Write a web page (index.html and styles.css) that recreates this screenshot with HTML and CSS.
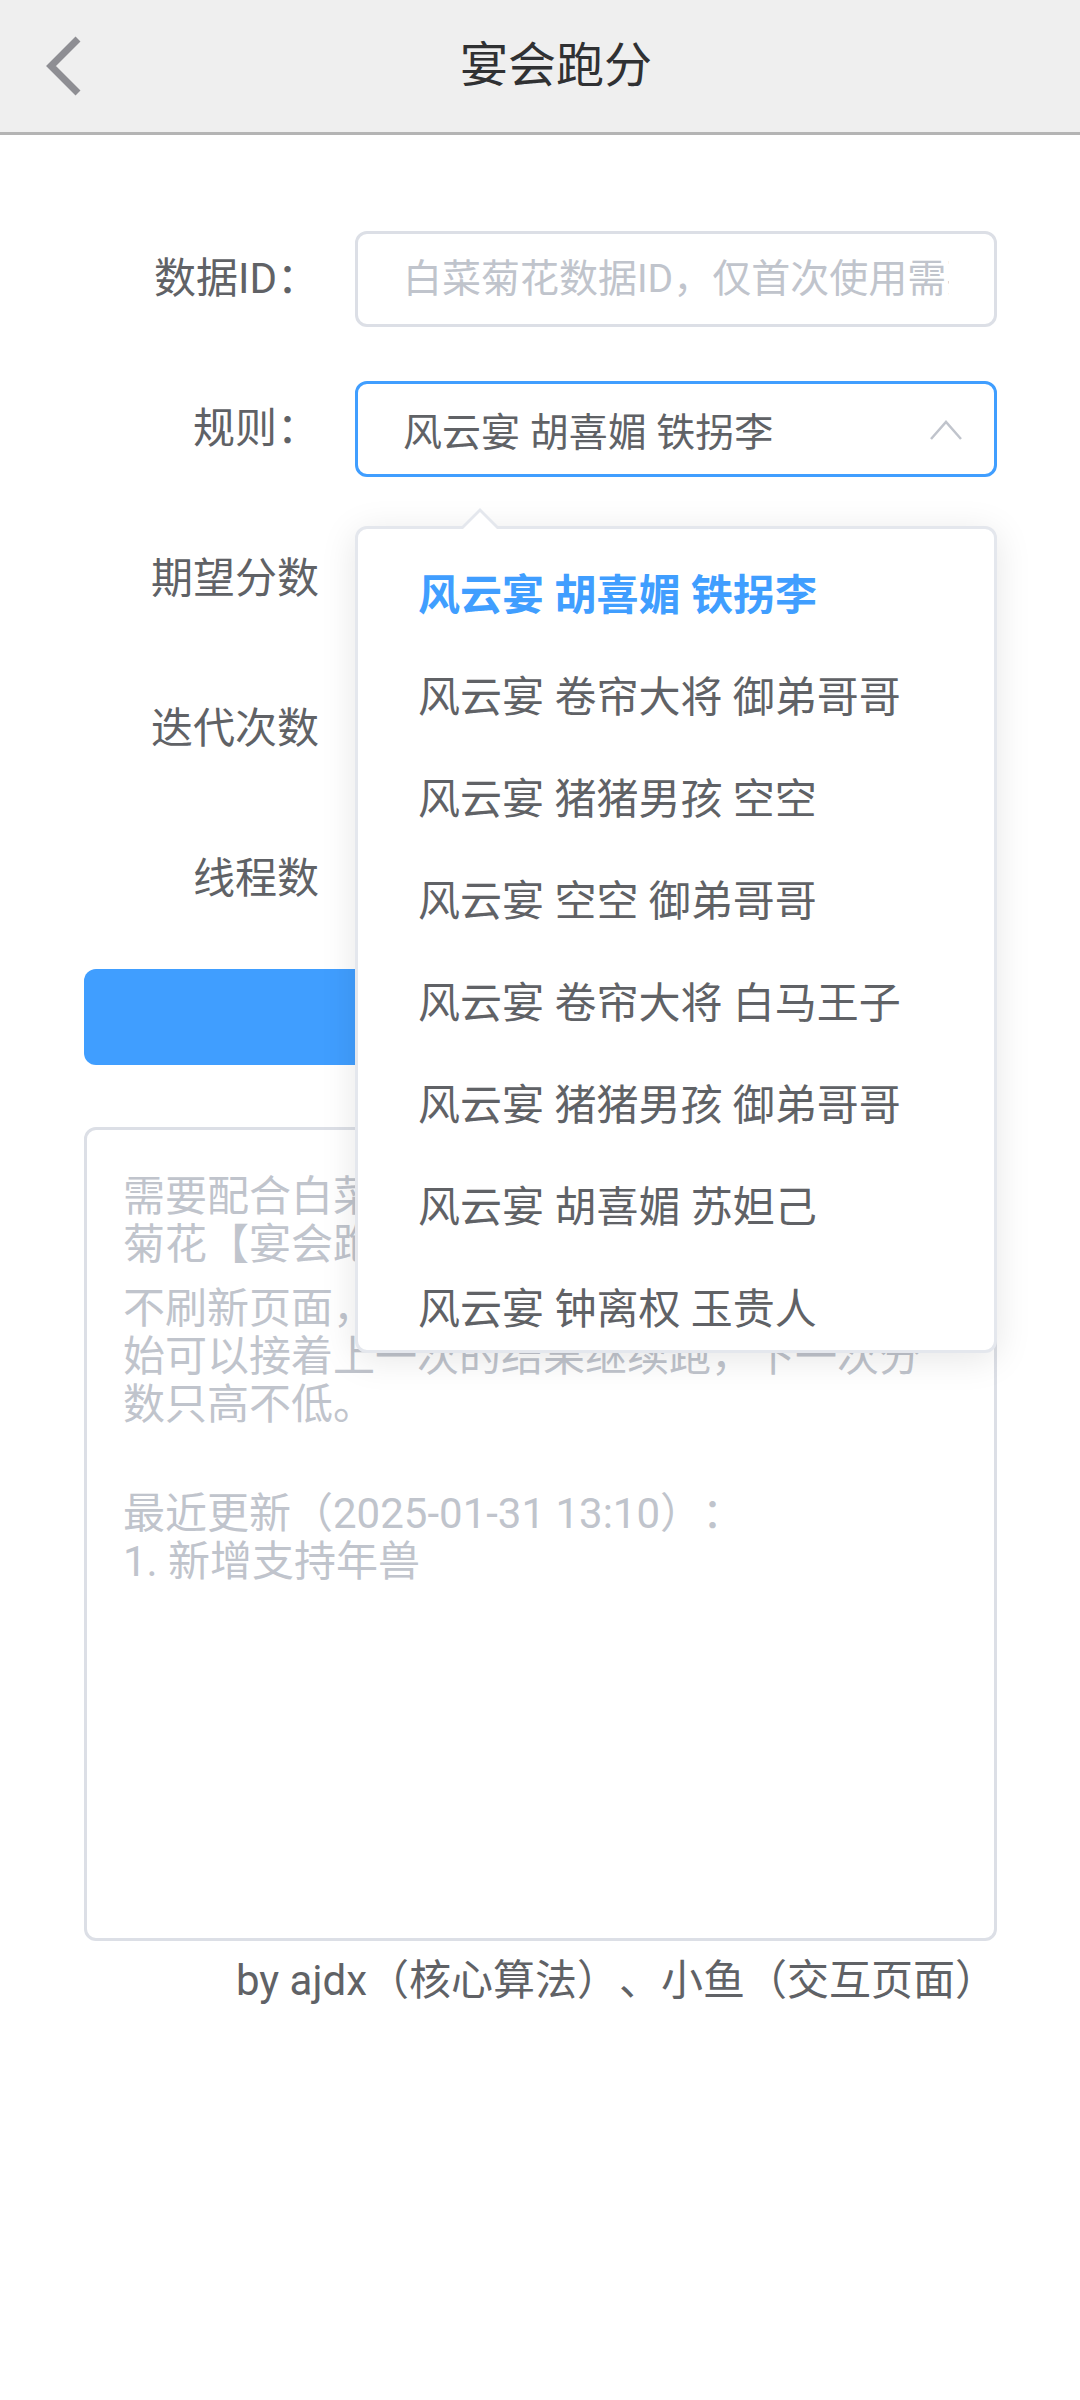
FILE: index.html
```html
<!DOCTYPE html>
<html lang="zh-CN">
<head>
<meta charset="utf-8">
<title>宴会跑分</title>
<link rel="stylesheet" href="styles.css">
</head>
<body>
<header class="topbar">
  <div class="back">
    <svg class="back-icon" width="40" height="64" viewBox="0 0 40 64" aria-hidden="true">
      <polyline points="34,5 7,32 34,59" fill="none" stroke="#8e8e93" stroke-width="7" stroke-linejoin="miter"/>
    </svg>
  </div>
  <h1 class="title">宴会跑分</h1>
  <div class="spacer"></div>
</header>

<main class="page">
  <div class="rows">
    <div class="row">
      <label class="label">数据ID：</label>
      <div class="control">
        <input class="input" type="text" placeholder="白菜菊花数据ID，仅首次使用需要填写">
      </div>
    </div>
    <div class="row">
      <label class="label">规则：</label>
      <div class="control select-wrap">
        <div class="select">
          <span class="select-value">风云宴 胡喜媚 铁拐李</span>
          <svg class="select-arrow" width="36" height="24" viewBox="0 0 36 24" aria-hidden="true">
            <polyline points="3,22 18,5 33,22" fill="none" stroke="#c0c4cc" stroke-width="2.5"/>
          </svg>
        </div>
        <div class="dropdown">
          <ul class="options">
            <li class="option selected">风云宴 胡喜媚 铁拐李</li>
            <li class="option">风云宴 卷帘大将 御弟哥哥</li>
            <li class="option">风云宴 猪猪男孩 空空</li>
            <li class="option">风云宴 空空 御弟哥哥</li>
            <li class="option">风云宴 卷帘大将 白马王子</li>
            <li class="option">风云宴 猪猪男孩 御弟哥哥</li>
            <li class="option">风云宴 胡喜媚 苏妲己</li>
            <li class="option">风云宴 钟离权 玉贵人</li>
            <li class="option">风云宴 年兽</li>
          </ul>
        </div>
      </div>
    </div>
    <div class="row">
      <label class="label">期望分数</label>
      <div class="control"><input class="input" type="text" value="0"></div>
    </div>
    <div class="row">
      <label class="label">迭代次数</label>
      <div class="control"><input class="input" type="text" value="100"></div>
    </div>
    <div class="row">
      <label class="label">线程数</label>
      <div class="control"><input class="input" type="text" value="4"></div>
    </div>
  </div>

  <button class="run" type="button">开始跑分</button>

  <div class="notes">
    <div class="line">需要配合白菜菊花小程序使用，请先在白菜</div>
    <div class="line">菊花【宴会跑分】页面上传数据。</div>
    <div class="line para">不刷新页面，多次点击开始按钮时，重新开</div>
    <div class="line">始可以接着上一次的结果继续跑，下一次分</div>
    <div class="line">数只高不低。</div>
    <div class="line blank"></div>
    <div class="line para-s">最近更新（2025-01-31 13:10）：</div>
    <div class="line">1. 新增支持年兽</div>
  </div>

  <p class="credit">by ajdx（核心算法）、小鱼（交互页面）</p>
</main>
</body>
</html>
```

FILE: styles.css
```css
* {
  box-sizing: border-box;
}

html, body {
  margin: 0;
  padding: 0;
  background: #ffffff;
}

body {
  width: 1080px;
  min-height: 2400px;
  font-family: Roboto, "Noto Sans CJK SC", "Noto Sans", sans-serif;
  color: #606266;
  text-spacing-trim: space-all;
}

/* ---------- top bar ---------- */
.topbar {
  display: flex;
  align-items: center;
  height: 135px;
  background: #efefef;
  border-bottom: 3px solid #b4b4b4;
}

.back {
  width: 132px;
  padding-left: 44px;
  display: flex;
  align-items: center;
}

.back-icon {
  display: block;
}

.title {
  flex: 1;
  margin: 0;
  text-align: center;
  font-size: 48px;
  font-weight: 400;
  color: #303133;
  line-height: 132px;
}

.spacer {
  width: 100px;
}

/* ---------- form ---------- */
.page {
  padding: 96px 83px 0 84px;
}

.rows {
  display: flex;
  flex-direction: column;
  gap: 54px;
}

.row {
  display: flex;
  height: 96px;
}

.label {
  width: 271px;
  padding-right: 36px;
  text-align: right;
  font-size: 42px;
  line-height: 96px;
  color: #606266;
  white-space: nowrap;
}

.control {
  flex: 1;
  min-width: 0;
}

.input {
  display: block;
  width: 100%;
  height: 96px;
  padding: 0 45px;
  border: 3px solid #dcdfe6;
  border-radius: 12px;
  background: #ffffff;
  font-family: inherit;
  font-size: 39px;
  color: #606266;
  outline: none;
  text-spacing-trim: space-all;
}

.input::placeholder {
  color: #c0c4cc;
}

.select-wrap {
  position: relative;
}

.select {
  display: flex;
  align-items: center;
  justify-content: space-between;
  height: 96px;
  padding: 0 30px 0 45px;
  border: 3px solid #409eff;
  border-radius: 12px;
  background: #ffffff;
  font-size: 39px;
  color: #606266;
}

.select-value {
  white-space: nowrap;
}

.select-arrow {
  display: block;
}

/* ---------- dropdown ---------- */
.dropdown {
  position: absolute;
  z-index: 10;
  top: 145px;
  left: 0;
  right: 0;
  height: 827px;
  background: #ffffff;
  border: 3px solid #e4e7ed;
  border-radius: 12px;
  box-shadow: 0 6px 36px rgba(0, 0, 0, 0.1);
}

.dropdown::before,
.dropdown::after {
  content: "";
  position: absolute;
  left: 104px;
  width: 0;
  height: 0;
  border-style: solid;
  border-width: 0 18px 18px 18px;
}

.dropdown::before {
  top: -21px;
  border-color: transparent transparent #e4e7ed transparent;
}

.dropdown::after {
  top: -17px;
  border-color: transparent transparent #ffffff transparent;
}

.options {
  list-style: none;
  margin: 0;
  padding: 16px 0 0;
  height: 100%;
  overflow: hidden;
  border-radius: 10px;
}

.option {
  height: 102px;
  line-height: 102px;
  padding: 0 57px 0 60px;
  font-size: 42px;
  color: #606266;
  white-space: nowrap;
}

.option.selected {
  color: #409eff;
  font-weight: 700;
}

/* ---------- button ---------- */
.run {
  display: block;
  width: 100%;
  height: 96px;
  margin-top: 42px;
  border: none;
  border-radius: 12px;
  background: #409eff;
  color: #ffffff;
  font-family: inherit;
  font-size: 42px;
}

/* ---------- notes box ---------- */
.notes {
  margin-top: 62px;
  height: 814px;
  padding: 43px 36px 0 36px;
  border: 3px solid #dcdfe6;
  border-radius: 12px;
  font-size: 42px;
  line-height: 48px;
  color: #c0c4cc;
}

.line {
  height: 48px;
  white-space: nowrap;
}

.line.para {
  margin-top: 16px;
}

.line.para-s {
  margin-top: 13px;
}

/* ---------- credit ---------- */
.credit {
  margin: 0;
  text-align: right;
  font-size: 42px;
  line-height: 80px;
  color: #606266;
}
```
